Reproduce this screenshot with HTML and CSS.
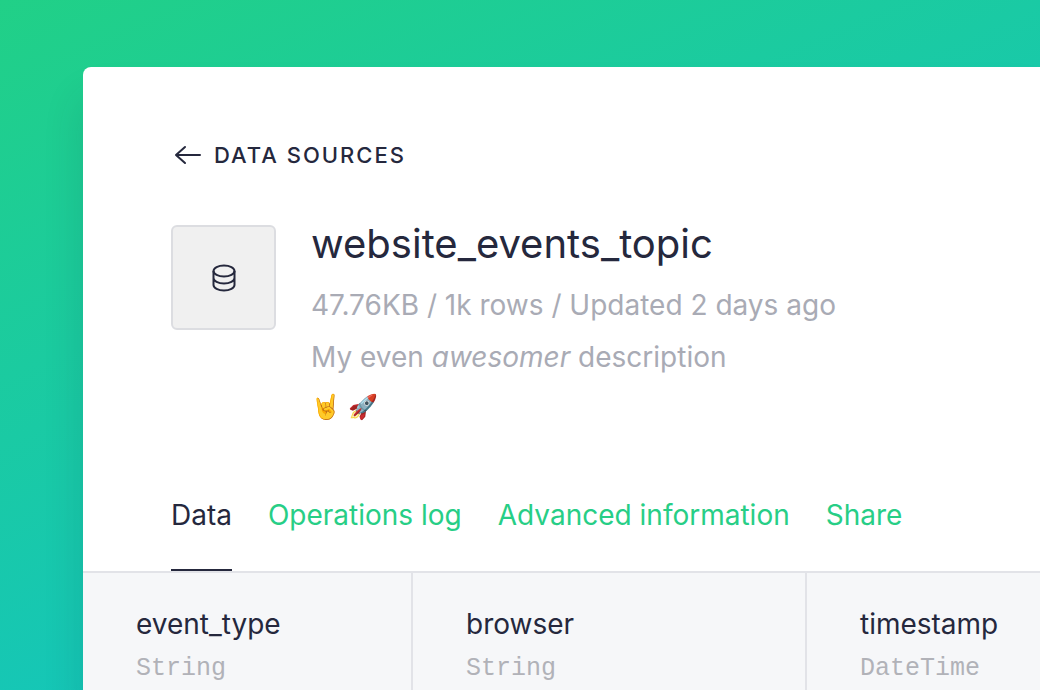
FILE: index.html
```html
<!DOCTYPE html>
<html lang="en">
<head>
<meta charset="utf-8">
<title>website_events_topic</title>
<link rel="stylesheet" href="styles.css">
</head>
<body>
<main class="window">
  <header class="header">
    <a class="back" href="#">
      <svg class="back-icon" viewBox="0 0 28 20" aria-hidden="true"><path d="M26 10H2M11 2L2 10l9 8"/></svg>
      Data Sources
    </a>
    <section class="summary">
      <div class="tile">
        <svg class="db-icon" viewBox="0 0 24 28" aria-hidden="true"><ellipse cx="12" cy="7" rx="10.500" ry="5.500"/><path d="M1.500 7v14c0 3 4.700 5.500 10.500 5.500s10.500-2.500 10.500-5.500V7M1.500 14c0 3 4.700 5.500 10.500 5.500s10.500-2.500 10.500-5.500"/></svg>
      </div>
      <div class="details">
        <h1 class="title">website_events_topic</h1>
        <p class="meta">47.76KB / 1k rows / Updated 2 days ago</p>
        <p class="description">My even <em>awesomer</em> description</p>
        <p class="emoji">🤘 🚀</p>
      </div>
    </section>
    <nav class="tabs">
      <a class="tab tab-active" href="#">Data</a>
      <a class="tab" href="#">Operations log</a>
      <a class="tab" href="#">Advanced information</a>
      <a class="tab" href="#">Share</a>
    </nav>
  </header>
  <table class="columns">
    <thead>
      <tr>
        <th class="col-event">event_type<span class="type">String</span></th>
        <th class="col-browser">browser<span class="type">String</span></th>
        <th>timestamp<span class="type">DateTime</span></th>
      </tr>
    </thead>
  </table>
</main>
</body>
</html>
```

FILE: styles.css
```css
* { box-sizing: border-box; }
body {
  margin: 0;
  min-height: 100vh;
  padding: 67px 0 0 83px;
  overflow: hidden;
  background: linear-gradient(157deg, #21d087, #14c5bd 72%);
  color: #25283d;
  font-family: Inter, "Liberation Sans", sans-serif;
}
.window {
  min-height: calc(100vh - 67px);
  background: #fff;
  border-top-left-radius: 8px;
  box-shadow: 0 32px 40px rgba(0, 60, 60, .14);
}
.header { padding: 73px 0 0 88px; border-bottom: 2px solid #e2e3e8; }
.back {
  display: flex;
  align-items: center;
  gap: 12px;
  padding-left: 3px;
  color: inherit;
  font-size: 22px;
  font-weight: 500;
  line-height: 30px;
  letter-spacing: 2px;
  text-transform: uppercase;
  text-decoration: none;
}
.back-icon { width: 28px; height: 20px; fill: none; stroke: currentColor; stroke-width: 2; stroke-linecap: round; stroke-linejoin: round; }
.summary { display: flex; gap: 35px; margin-top: 49px; }
.tile {
  display: grid;
  place-items: center;
  width: 105px;
  height: 105px;
  margin-top: 6px;
  background: #f0f0f0;
  border: 2px solid #dcdde1;
  border-radius: 6px;
}
.db-icon { width: 24px; height: 28px; fill: none; stroke: currentColor; stroke-width: 2; }
.title { margin: 0; font-size: 40px; font-weight: 400; line-height: 50px; }
.meta, .description, .emoji { margin: 0; color: #a9abb5; font-size: 28px; line-height: 52px; }
.meta { margin-top: 10px; }
.emoji { font-size: 24px; line-height: 48px; }
.tabs { display: flex; gap: 36px; margin-top: 60px; }
.tab {
  padding-bottom: 30px;
  color: #27ce86;
  font-size: 28px;
  line-height: 48px;
  text-decoration: none;
}
.tab-active { color: #25283d; border-bottom: 2px solid #25283d; }
.columns { width: 100%; border-collapse: separate; border-spacing: 0; background: #f6f7f9; table-layout: fixed; }
.columns th {
  padding: 33px 0 0 53px;
  border-right: 2px solid #e2e3e8;
  font-size: 28px;
  font-weight: 400;
  line-height: 36px;
  text-align: left;
  height: 118px;
  vertical-align: top;
}
.columns th:last-child { border-right: 0; }
.columns .col-event { width: 330px; }
.columns .col-browser { width: 394px; }
.type { display: block; color: #b1b2b8; font-family: "Liberation Mono", monospace; font-size: 25px; line-height: 54px; }
```
